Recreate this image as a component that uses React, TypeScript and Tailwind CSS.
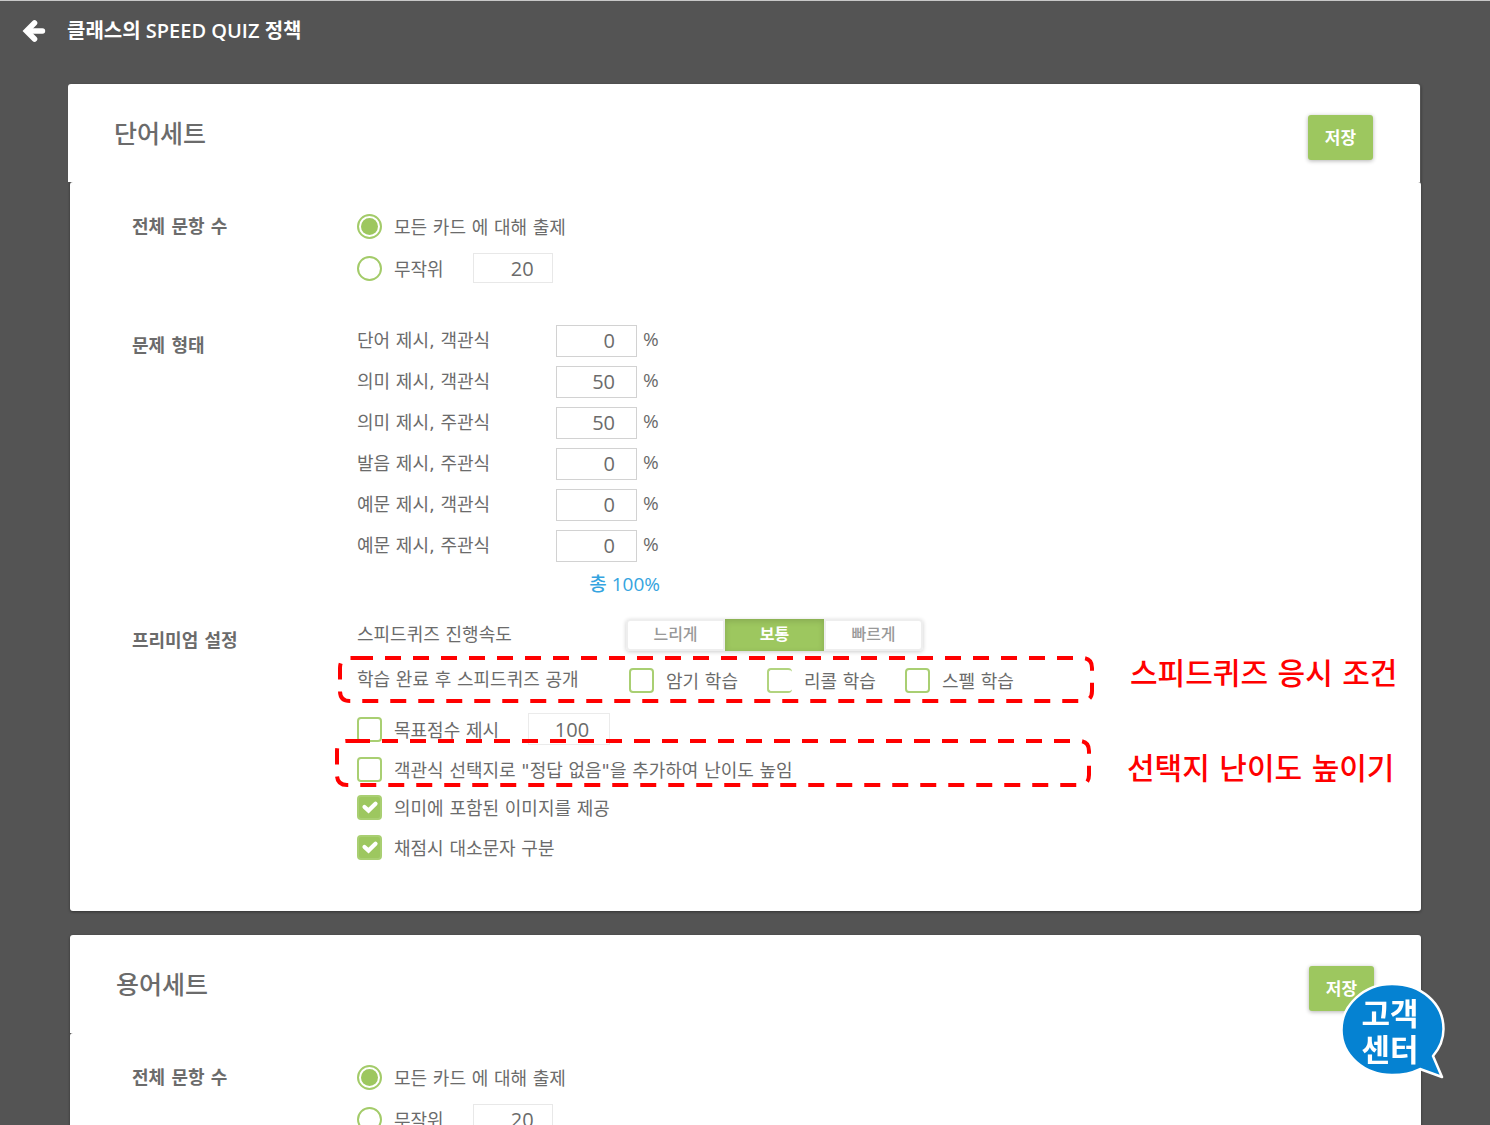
import React from 'react';

// --- Data ---

const QUESTION_TYPES = [
  { id: 'word-choice', label: '단어 제시, 객관식', value: 0 },
  { id: 'meaning-choice', label: '의미 제시, 객관식', value: 50 },
  { id: 'meaning-write', label: '의미 제시, 주관식', value: 50 },
  { id: 'sound-write', label: '발음 제시, 주관식', value: 0 },
  { id: 'example-choice', label: '예문 제시, 객관식', value: 0 },
  { id: 'example-write', label: '예문 제시, 주관식', value: 0 },
];

const SPEEDS = ['느리게', '보통', '빠르게'];

// --- Icons ---

function BackArrow() {
  return (
    <svg viewBox="0 0 24 24" className="size-6" fill="none" stroke="currentColor" aria-hidden="true">
      <path d="M12.5 4 L4.5 12 L12.5 20" strokeWidth="5.6" strokeLinecap="round" strokeLinejoin="miter" />
      <path d="M6 12 H20.5" strokeWidth="5.4" strokeLinecap="round" />
    </svg>
  );
}

function CheckMark() {
  return (
    <svg
      viewBox="0 0 18 18"
      className="pointer-events-none invisible col-start-1 row-start-1 size-[18px] place-self-center peer-checked:visible"
      fill="none"
      stroke="#ffffff"
      strokeWidth="4.2"
      strokeLinecap="round"
      aria-hidden="true"
    >
      <path d="M3.5 9 L7.5 12.6 L14.5 5.8" />
    </svg>
  );
}

// --- Form controls ---

function CheckBox({ id, label, checked = false, open = false }: {
  id: string;
  label: string;
  checked?: boolean;
  open?: boolean;
}) {
  return (
    <div className="flex items-center gap-3">
      <span className="grid">
        <input
          id={id}
          type="checkbox"
          defaultChecked={checked}
          className={`peer col-start-1 row-start-1 size-[25px] appearance-none rounded bg-white checked:bg-[#9dc75f] ${
            open ? 'border-2 border-r-0 border-[#b2d47f]' : 'border-2 border-[#a9cf72]'
          }`}
        />
        <CheckMark />
      </span>
      <label htmlFor={id} className="pt-1 whitespace-nowrap">
        {label}
      </label>
    </div>
  );
}

function Radio({ id, name, label, checked = false }: {
  id: string;
  name: string;
  label: string;
  checked?: boolean;
}) {
  return (
    <div className="flex items-center gap-3">
      <span className="grid">
        <input
          id={id}
          name={name}
          type="radio"
          defaultChecked={checked}
          className="peer col-start-1 row-start-1 size-[25px] appearance-none rounded-full border-2 border-[#a3cb69] bg-white"
        />
        <span className="pointer-events-none invisible col-start-1 row-start-1 size-[17px] place-self-center rounded-full bg-[#9dc75f] peer-checked:visible" />
      </span>
      <label htmlFor={id} className="pt-1 whitespace-nowrap">
        {label}
      </label>
    </div>
  );
}

const NUMBER_BOX =
  "border bg-white text-right font-['Open_Sans','Noto_Sans_CJK_KR',sans-serif] text-xl text-[#6b6b6b] outline-none";

function SaveButton() {
  return (
    <button
      type="button"
      className="h-[45px] w-[65px] rounded-[3px] bg-[#9dc75f] pt-0.5 text-[17px] font-bold text-white shadow-[0_1px_4px_rgba(0,0,0,0.3)]"
    >
      저장
    </button>
  );
}

// --- Annotation: dashed frame with a note to its right ---

function Callout({ note, height, className }: { note: string; height: number; className: string }) {
  const bottom = height - 2;
  const d = `M19 2 H744 Q754 2 754 12 V${bottom - 10} Q754 ${bottom} 744 ${bottom} H12 Q2 ${bottom} 2 ${bottom - 10} V12 Q2 2 12 2 H19`;
  return (
    <div className={`pointer-events-none absolute flex ${className}`}>
      <svg width={756} height={height} fill="none" stroke="#ff0000" strokeWidth={4} aria-hidden="true">
        <path d={d} strokeDasharray="16 12" />
      </svg>
      <span className="text-[30px] leading-9 font-medium whitespace-nowrap text-[#ff0000]">{note}</span>
    </div>
  );
}

// --- Layout ---

function Section({ title, titleClass, children }: {
  title: string;
  titleClass: string;
  children: React.ReactNode;
}) {
  return (
    <section className="flex items-start">
      <h3 className={`flex w-[225px] shrink-0 items-center pt-0.5 font-bold ${titleClass}`}>{title}</h3>
      <div className="min-w-0 flex-1">{children}</div>
    </section>
  );
}

function CountSection({ prefix }: { prefix: string }) {
  return (
    <Section title="전체 문항 수" titleClass="h-[42px]">
      <div className="flex h-[42px] items-center">
        <Radio id={`${prefix}-all`} name={`${prefix}-count`} label="모든 카드 에 대해 출제" checked />
      </div>
      <div className="flex h-[42px] items-center gap-[29px]">
        <Radio id={`${prefix}-random`} name={`${prefix}-count`} label="무작위" />
        <input
          aria-label="무작위 문항 수"
          defaultValue={20}
          className={`h-[30px] w-20 border-[#e8e8e8] pr-[18px] ${NUMBER_BOX}`}
        />
      </div>
    </Section>
  );
}

function TypeSection({ prefix }: { prefix: string }) {
  const total = QUESTION_TYPES.reduce((sum, type) => sum + type.value, 0);
  return (
    <Section title="문제 형태" titleClass="h-[50px]">
      {QUESTION_TYPES.map((type) => (
        <div key={type.id} className="flex h-[41px] items-center">
          <label htmlFor={`${prefix}-${type.id}`} className="w-[199px]">
            {type.label}
          </label>
          <input
            id={`${prefix}-${type.id}`}
            defaultValue={type.value}
            className={`h-8 w-[81px] border-[#d2d2d2] pr-[21px] ${NUMBER_BOX}`}
          />
          <span className="ml-1.5 pb-0.5 font-['Open_Sans',sans-serif] text-[19px]">%</span>
        </div>
      ))}
      <p className="flex h-9 w-[303px] items-center justify-end font-['Open_Sans','Noto_Sans_CJK_KR',sans-serif] text-[19px] font-medium text-[#35a4e0]">
        총 {total}%
      </p>
    </Section>
  );
}

function PremiumSection({ prefix }: { prefix: string }) {
  const [speed, setSpeed] = React.useState('보통');

  return (
    <Section title="프리미엄 설정" titleClass="h-[46px]">
      <div className="flex h-9 items-center">
        <span className="w-[269px]">스피드퀴즈 진행속도</span>
        <div className="flex h-8 rounded shadow-[0_1px_4px_rgba(0,0,0,0.2)]">
          {SPEEDS.map((item) => (
            <button
              key={item}
              type="button"
              aria-pressed={item === speed}
              onClick={() => setSpeed(item)}
              className={`w-[99px] text-base leading-none first:rounded-l last:rounded-r ${
                item === speed
                  ? 'bg-[#9dc75f] font-bold text-white shadow-[inset_0_2px_6px_rgba(0,0,0,0.15)]'
                  : 'border-2 border-[#eeeeee] bg-white font-medium text-[#999999]'
              }`}
            >
              {item}
            </button>
          ))}
        </div>
      </div>

      <div className="relative flex h-[54px] items-center">
        <span className="w-[272px]">학습 완료 후 스피드퀴즈 공개</span>
        <div className="flex gap-[29px]">
          <CheckBox id={`${prefix}-memorize`} label="암기 학습" />
          <CheckBox id={`${prefix}-recall`} label="리콜 학습" open />
          <CheckBox id={`${prefix}-spell`} label="스펠 학습" />
        </div>
        <Callout note="스피드퀴즈 응시 조건" height={47} className="top-[3px] -left-[19px] items-start gap-9" />
      </div>

      <div className="flex h-11 items-center gap-[29px]">
        <CheckBox id={`${prefix}-goal`} label="목표점수 제시" />
        <input
          aria-label="목표점수"
          defaultValue={100}
          className={`h-8 w-[82px] border-[#ebebeb] pr-5 ${NUMBER_BOX}`}
        />
      </div>
      <div className="relative flex h-9 items-center">
        <CheckBox id={`${prefix}-none`} label={'객관식 선택지로 "정답 없음"을 추가하여 난이도 높임'} />
        <Callout note="선택지 난이도 높이기" height={48} className="-top-3 -left-[22px] items-end gap-9" />
      </div>
      <div className="flex h-10 items-center">
        <CheckBox id={`${prefix}-image`} label="의미에 포함된 이미지를 제공" checked />
      </div>
      <div className="flex h-10 items-center">
        <CheckBox id={`${prefix}-case`} label="채점시 대소문자 구분" checked />
      </div>
    </Section>
  );
}

function SetCard({ title, headerClass = '', children }: {
  title: string;
  headerClass?: string;
  children: React.ReactNode;
}) {
  return (
    <article className="rounded-[3px] shadow-[0_1px_3px_rgba(0,0,0,0.4)]">
      <header
        className={`flex h-[98px] items-center justify-between rounded-t-[3px] bg-white pt-2 pr-[47px] pl-[46px] ${headerClass}`}
      >
        <h2 className="pb-1.5 text-[25px] leading-none font-medium">{title}</h2>
        <SaveButton />
      </header>
      <div className="rounded-[3px] bg-white pt-[23px] pb-11 pl-[62px]">{children}</div>
    </article>
  );
}

function HelpBubble() {
  return (
    <a href="#help" className="fixed right-11 bottom-[45px] grid h-[98px] w-[104px] text-white">
      <svg viewBox="0 0 104 98" className="col-start-1 row-start-1 size-full" aria-hidden="true">
        <path
          d="M50 2 C79 2 101.500 21 101.500 47 C101.500 58 97 67 91 74 L100 95 L78 87 C70 91 61 93 50 93 C22 93 -0.500 73 -0.500 48 C-0.500 23 22 2 50 2 Z"
          fill="#0582d2"
          stroke="#ffffff"
          strokeWidth="2.5"
          strokeLinejoin="round"
        />
      </svg>
      <span className="relative col-start-1 row-start-1 pt-3.5 pr-2 text-center text-[31px] leading-9 font-bold">
        고객
        <br />
        센터
      </span>
    </a>
  );
}

export default function App() {
  return (
    <div
      lang="ko"
      className="h-screen overflow-hidden border-t border-[#c8c8c8] bg-[#545454] font-['DejaVu_Sans','Noto_Sans_CJK_KR',sans-serif] text-lg leading-none text-[#6b6b6b]"
    >
      <nav className="flex h-[83px] items-start gap-[21px] pt-[18px] pl-[22px] text-white">
        <button type="button" aria-label="뒤로" className="flex h-6 items-center">
          <BackArrow />
        </button>
        <h1 className="font-['Open_Sans','Noto_Sans_CJK_KR',sans-serif] text-xl leading-6 font-semibold">
          클래스의 SPEED QUIZ 정책
        </h1>
      </nav>
      <main className="mr-[69px] ml-[70px] flex flex-col gap-6">
        <SetCard title="단어세트" headerClass="mr-px -ml-0.5">
          <CountSection prefix="word" />
          <div className="mt-[31px]">
            <TypeSection prefix="word" />
          </div>
          <div className="mt-[15px]">
            <PremiumSection prefix="word" />
          </div>
        </SetCard>
        <SetCard title="용어세트">
          <CountSection prefix="term" />
        </SetCard>
      </main>
      <HelpBubble />
    </div>
  );
}
